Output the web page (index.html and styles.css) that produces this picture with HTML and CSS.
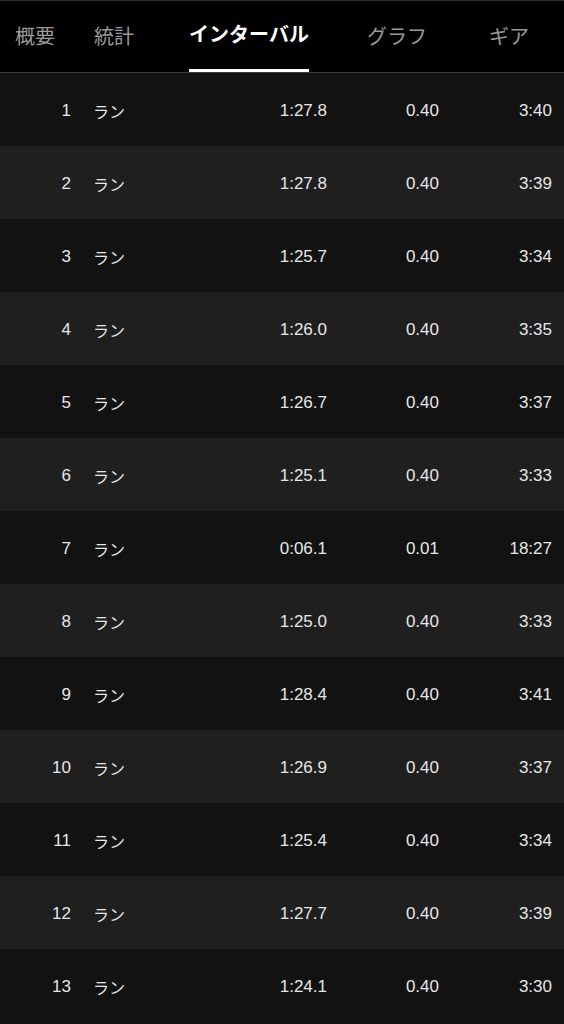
FILE: index.html
```html
<!DOCTYPE html>
<html lang="ja">

<head>
    <meta charset="UTF-8" />
    <meta name="viewport" content="width=device-width, initial-scale=1.0" />
    <title>インターバル</title>
    <link rel="stylesheet" href="styles.css">
</head>

<body>
    <nav class="tabs">
        <div class="tab">概要</div>
        <div class="tab">統計</div>
        <div class="tab active"><span>インターバル</span></div>
        <div class="tab">グラフ</div>
        <div class="tab">ギア</div>
    </nav>

    <div class="laps">
        <div class="lap"><span class="num">1</span><span class="kind">ラン</span><span class="time">1:27.8</span><span class="dist">0.40</span><span class="pace">3:40</span></div>
        <div class="lap"><span class="num">2</span><span class="kind">ラン</span><span class="time">1:27.8</span><span class="dist">0.40</span><span class="pace">3:39</span></div>
        <div class="lap"><span class="num">3</span><span class="kind">ラン</span><span class="time">1:25.7</span><span class="dist">0.40</span><span class="pace">3:34</span></div>
        <div class="lap"><span class="num">4</span><span class="kind">ラン</span><span class="time">1:26.0</span><span class="dist">0.40</span><span class="pace">3:35</span></div>
        <div class="lap"><span class="num">5</span><span class="kind">ラン</span><span class="time">1:26.7</span><span class="dist">0.40</span><span class="pace">3:37</span></div>
        <div class="lap"><span class="num">6</span><span class="kind">ラン</span><span class="time">1:25.1</span><span class="dist">0.40</span><span class="pace">3:33</span></div>
        <div class="lap"><span class="num">7</span><span class="kind">ラン</span><span class="time">0:06.1</span><span class="dist">0.01</span><span class="pace">18:27</span></div>
        <div class="lap"><span class="num">8</span><span class="kind">ラン</span><span class="time">1:25.0</span><span class="dist">0.40</span><span class="pace">3:33</span></div>
        <div class="lap"><span class="num">9</span><span class="kind">ラン</span><span class="time">1:28.4</span><span class="dist">0.40</span><span class="pace">3:41</span></div>
        <div class="lap"><span class="num">10</span><span class="kind">ラン</span><span class="time">1:26.9</span><span class="dist">0.40</span><span class="pace">3:37</span></div>
        <div class="lap"><span class="num">11</span><span class="kind">ラン</span><span class="time">1:25.4</span><span class="dist">0.40</span><span class="pace">3:34</span></div>
        <div class="lap"><span class="num">12</span><span class="kind">ラン</span><span class="time">1:27.7</span><span class="dist">0.40</span><span class="pace">3:39</span></div>
        <div class="lap"><span class="num">13</span><span class="kind">ラン</span><span class="time">1:24.1</span><span class="dist">0.40</span><span class="pace">3:30</span></div>
    </div>
</body>

</html>
```

FILE: styles.css
```css
body {
    margin: 0;
    background-color: #121212;
    color: #e6e6e6;
    font-family: "Liberation Sans", "Noto Sans CJK JP", sans-serif;
}

.tabs {
    display: grid;
    grid-template-columns: 70px 88px 182px 114px 110px;
    height: 71px;
    background-color: #000;
    border-top: 1px solid #2e2e2e;
    border-bottom: 1px solid #3a3a3a;
}

.tab {
    display: flex;
    justify-content: center;
    align-items: stretch;
    font-size: 20px;
    color: #9a9a9a;
    line-height: 72px;
}

.tab.active {
    color: #fff;
    font-weight: bold;
}

.tab.active span {
    box-sizing: border-box;
    height: 71px;
    line-height: 69px;
    border-bottom: 3px solid #fff;
}

.lap {
    box-sizing: border-box;
    display: grid;
    grid-template-columns: 71px 1fr 120px 112px 113px;
    align-items: center;
    height: 73px;
    padding: 2px 12px 0 0;
    font-size: 17px;
    background-color: #121212;
}

.lap:nth-child(even) {
    background-color: #1f1f1f;
}

.num,
.time,
.dist,
.pace {
    text-align: right;
}

.kind {
    padding-left: 22px;
    font-size: 16px;
}
```
